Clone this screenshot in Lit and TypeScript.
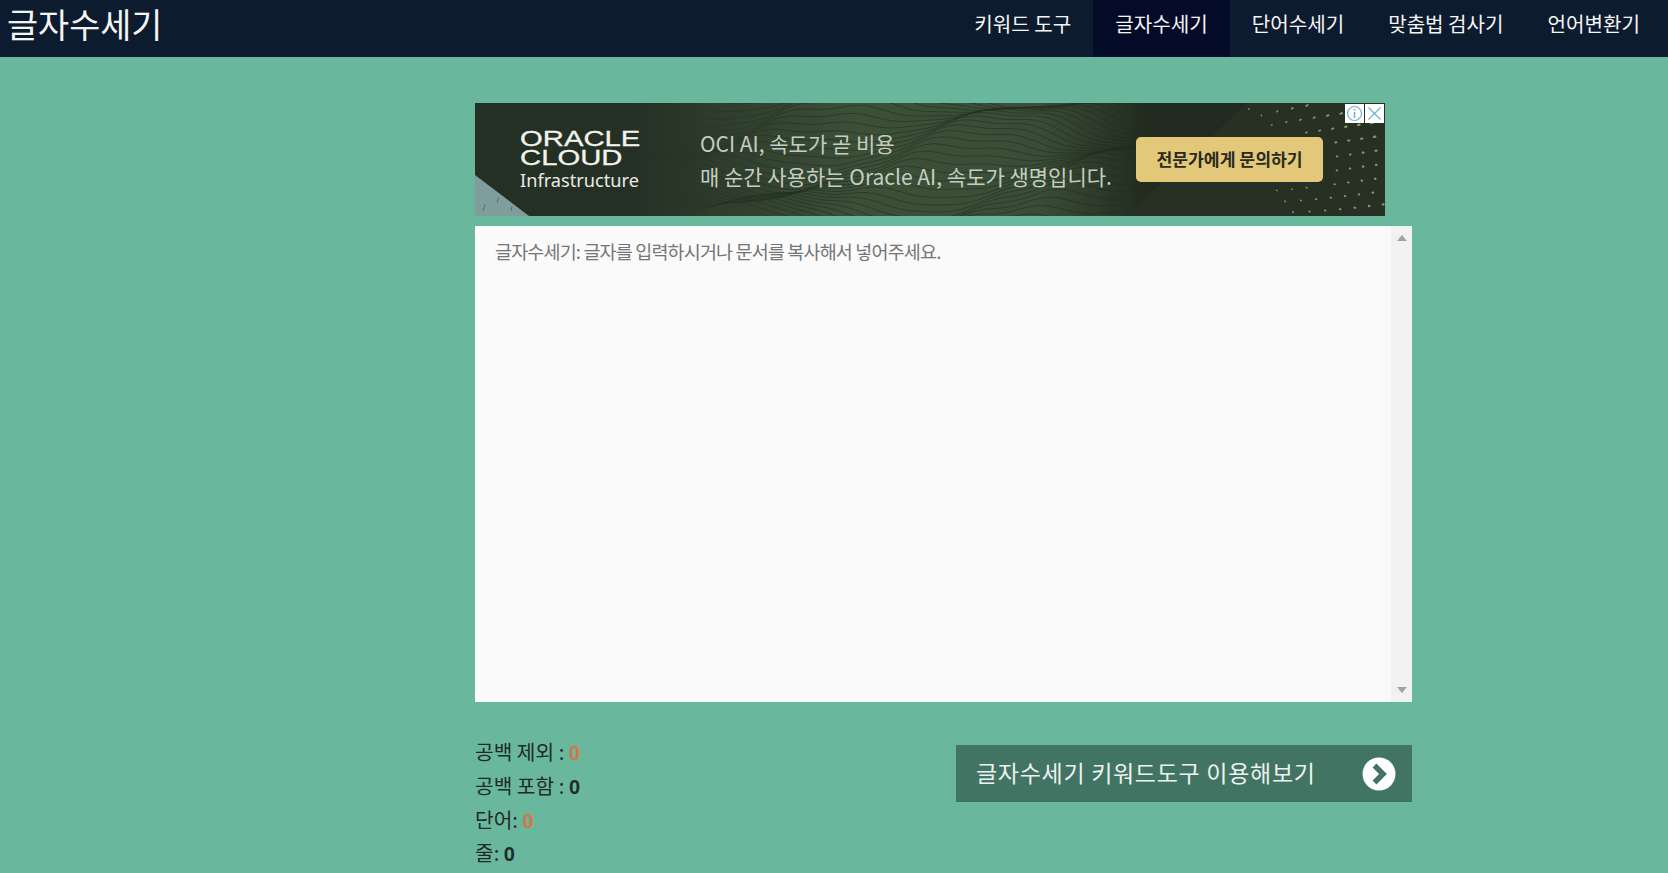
import { LitElement, html, css, svg } from 'lit';
import { customElement } from 'lit/decorators.js';

const KR = '"Noto Sans CJK KR", "Noto Sans", sans-serif';

// contour lines behind the ad copy
function contourPaths() {
  const out: string[] = [];
  for (let i = 0; i < 30; i++) {
    const base = i * 4.4 - 6;
    let d = `M 150 ${base}`;
    for (let x = 158; x <= 780; x += 8) {
      const y =
        base +
        Math.sin(x / 13 + i * 0.55) * 3 * Math.sin(x / 90 + i * 0.2) +
        Math.sin(x / 37 + i * 0.35) * 9 +
        Math.sin(x / 83 - i * 0.15) * 12;
      d += ` L ${x} ${y.toFixed(1)}`;
    }
    out.push(d);
  }
  return out;
}

// fan of dots in the right corner of the ad, growing outward
function sprayDots() {
  const out: { x1: number; y1: number; x2: number; y2: number; w: number }[] = [];
  const cx = 755;
  const cy = 58;
  for (let ring = 0; ring < 9; ring++) {
    const radius = 55 + ring * 13;
    const step = 14 / radius;
    for (let a = 0.35; a <= 2.3; a += step) {
      const sx = Math.sin(a);
      const cy2 = -Math.cos(a);
      const x = cx + sx * radius;
      const y = cy + cy2 * radius;
      if (x > 908 || y < 2 || y > 111) continue;
      if (x > 655 && x < 852 && y > 30 && y < 83) continue;
      const len = 0.5 + Math.max(0, -cy2) * ring * 0.7;
      out.push({ x1: x, y1: y, x2: x + sx * len, y2: y + cy2 * len, w: 1.4 + ring * 0.12 });
    }
  }
  return out;
}

@customElement('app-root')
export class AppRoot extends LitElement {
  static styles = css`
    :host {
      display: block;
      min-height: 873px;
      background: #69b89e;
      font-family: ${css([KR] as any)};
      color: #212a27;
    }
    .topbar {
      height: 57px;
      background: #0d1b2e;
      display: flex;
      justify-content: space-between;
      padding: 0 6px 0 7px;
    }
    .brand {
      font-size: 33.8px;
      line-height: 48px;
      color: #f4f4f4;
    }
    .menu {
      display: flex;
    }
    .menu a {
      padding: 0 22px;
      font-size: 20.1px;
      line-height: 48px;
      color: #f5f5f5;
    }
    .menu a.active {
      background: #040b28;
    }
    main {
      width: 937px;
      margin-left: 475px;
      padding-top: 46px;
    }
    .ad {
      position: relative;
      width: 910px;
      height: 113px;
      overflow: hidden;
      display: flex;
      align-items: center;
      background: linear-gradient(90deg, #253024 0 17%, #3c5038 42%, #3a4d36 62%, #212b1f 74%);
      color: #c6cdc2;
    }
    .ad-art {
      position: absolute;
      inset: 0;
    }
    .logo {
      position: relative;
      width: 120px;
      margin-left: 45px;
      color: #f1f3ee;
      padding-top: 2px;
    }
    .logo div {
      font-family: 'Liberation Sans', sans-serif;
      font-size: 22px;
      line-height: 19px;
      -webkit-text-stroke: 0.3px #f1f3ee;
      transform: scaleX(1.33);
      transform-origin: left;
      white-space: nowrap;
    }
    .logo span {
      display: block;
      font-family: 'Noto Sans', sans-serif;
      font-size: 18.2px;
      line-height: 26px;
      color: #e8ebe4;
    }
    .copy {
      position: relative;
      margin-left: 60px;
      font-size: 21px;
      line-height: 33px;
      white-space: nowrap;
    }
    .ad-btn {
      position: absolute;
      left: 661px;
      top: 34px;
      width: 187px;
      height: 45px;
      box-sizing: border-box;
      border-radius: 5px;
      background: #e3c879;
      color: #2a2a1e;
      font-size: 17.2px;
      font-weight: 700;
      line-height: 43px;
      text-align: center;
    }
    .ad-tools {
      position: absolute;
      top: 1px;
      right: 1px;
      display: flex;
      gap: 1px;
    }
    .ad-tools svg {
      display: block;
      background: #fff;
    }
    .editor {
      display: flex;
      height: 476px;
      margin-top: 10px;
      background: #fafafa;
    }
    textarea {
      flex: 1;
      box-sizing: border-box;
      border: 0;
      outline: 0;
      resize: none;
      padding: 12px 20px;
      background: transparent;
      font-family: ${css([KR] as any)};
      font-size: 18.5px;
      letter-spacing: -0.85px;
      line-height: 26px;
    }
    textarea::placeholder {
      color: #757575;
      opacity: 1;
    }
    .scrollbar {
      width: 21px;
      background: #f1f1f1;
      display: flex;
      flex-direction: column;
      justify-content: space-between;
      align-items: center;
      padding: 9px 0;
      box-sizing: border-box;
    }
    .arrow {
      width: 0;
      height: 0;
      border-left: 5px solid transparent;
      border-right: 5px solid transparent;
    }
    .arrow.up {
      border-bottom: 6px solid #a3a3a3;
    }
    .arrow.down {
      border-top: 6px solid #a3a3a3;
    }
    .bottom {
      display: flex;
      justify-content: space-between;
      align-items: flex-start;
      padding-top: 33px;
    }
    .stats {
      font-size: 20.3px;
    }
    .stats div {
      height: 33.8px;
      line-height: 33.8px;
    }
    .stats b {
      font-family: 'Liberation Sans', sans-serif;
      font-weight: 700;
      font-size: 20px;
    }
    .stats b.hot {
      color: #cc7c50;
      -webkit-text-stroke: 0.4px #cc7c50;
    }
    .cta {
      width: 456px;
      height: 57px;
      margin-top: 10px;
      box-sizing: border-box;
      padding: 0 16px 0 20px;
      background: #417463;
      color: #ecf2ef;
      display: flex;
      align-items: center;
      justify-content: space-between;
      font-size: 23px;
      letter-spacing: 0.7px;
    }
    .cta span {
      padding-bottom: 4px;
    }
  `;

  render() {
    return html`
      <div class="topbar">
        <div class="brand">글자수세기</div>
        <nav class="menu">
          <a>키워드 도구</a>
          <a class="active">글자수세기</a>
          <a>단어수세기</a>
          <a>맞춤법 검사기</a>
          <a>언어변환기</a>
        </nav>
      </div>
      <main>
        <div class="ad">
          <svg class="ad-art" width="910" height="113" viewBox="0 0 910 113">
            <defs>
              <linearGradient id="fade" gradientUnits="userSpaceOnUse" x1="150" y1="0" x2="320" y2="0">
                <stop offset="0" stop-color="#1f2b1e" stop-opacity="0"></stop>
                <stop offset="1" stop-color="#1f2b1e" stop-opacity="0.7"></stop>
              </linearGradient>
            </defs>
            <g fill="none" stroke="url(#fade)" stroke-width="0.8">
              ${contourPaths().map((d) => svg`<path d=${d}></path>`)}
            </g>
            <path d="M652 113 L772 0 L910 0 L910 113 Z" fill="#283024"></path>
            <path d="M0 72 L54 113 L0 113 Z" fill="#7f9d9c"></path>
            <g stroke="#54706f" stroke-width="1">
              <path d="M8 108 L10 101"></path>
              <path d="M22 100 L24 94"></path>
              <path d="M36 108 L37 103"></path>
            </g>
            <g stroke="#7d9c74" stroke-linecap="round">
              ${sprayDots().map(
                (p) => svg`<line x1=${p.x1} y1=${p.y1} x2=${p.x2} y2=${p.y2} stroke-width=${p.w}></line>`,
              )}
            </g>
          </svg>
          <div class="logo">
            <div>ORACLE<br />CLOUD</div>
            <span>Infrastructure</span>
          </div>
          <div class="copy">OCI AI, 속도가 곧 비용<br />매 순간 사용하는 Oracle AI, 속도가 생명입니다.</div>
          <div class="ad-btn">전문가에게 문의하기</div>
          <div class="ad-tools">
            <svg width="19" height="19" viewBox="0 0 19 19" fill="none" stroke="#6fb1cf">
              <circle cx="9.5" cy="9.5" r="7" stroke-width="1.2"></circle>
              <path d="M9.5 8 V14" stroke-width="1.6"></path>
              <path d="M9.5 5 V6.6" stroke-width="1.6"></path>
            </svg>
            <svg width="19" height="19" viewBox="0 0 19 19" fill="none" stroke="#6fb1cf" stroke-width="1.2">
              <path d="M3.5 3.5 L15.5 15.5 M15.5 3.5 L3.5 15.5"></path>
            </svg>
          </div>
        </div>
        <div class="editor">
          <textarea placeholder="글자수세기: 글자를 입력하시거나 문서를 복사해서 넣어주세요."></textarea>
          <div class="scrollbar">
            <div class="arrow up"></div>
            <div class="arrow down"></div>
          </div>
        </div>
        <div class="bottom">
          <div class="stats">
            <div>공백 제외 : <b class="hot">0</b></div>
            <div>공백 포함 : <b>0</b></div>
            <div>단어: <b class="hot">0</b></div>
            <div>줄: <b>0</b></div>
          </div>
          <div class="cta">
            <span>글자수세기 키워드도구 이용해보기</span>
            <svg width="34" height="34" viewBox="0 0 34 34">
              <circle cx="17" cy="17" r="16.5" fill="#fff"></circle>
              <path d="M12.5 8.5 L21 17 L12.5 25.5" fill="none" stroke="#417463" stroke-width="5.5"></path>
            </svg>
          </div>
        </div>
      </main>
    `;
  }
}
